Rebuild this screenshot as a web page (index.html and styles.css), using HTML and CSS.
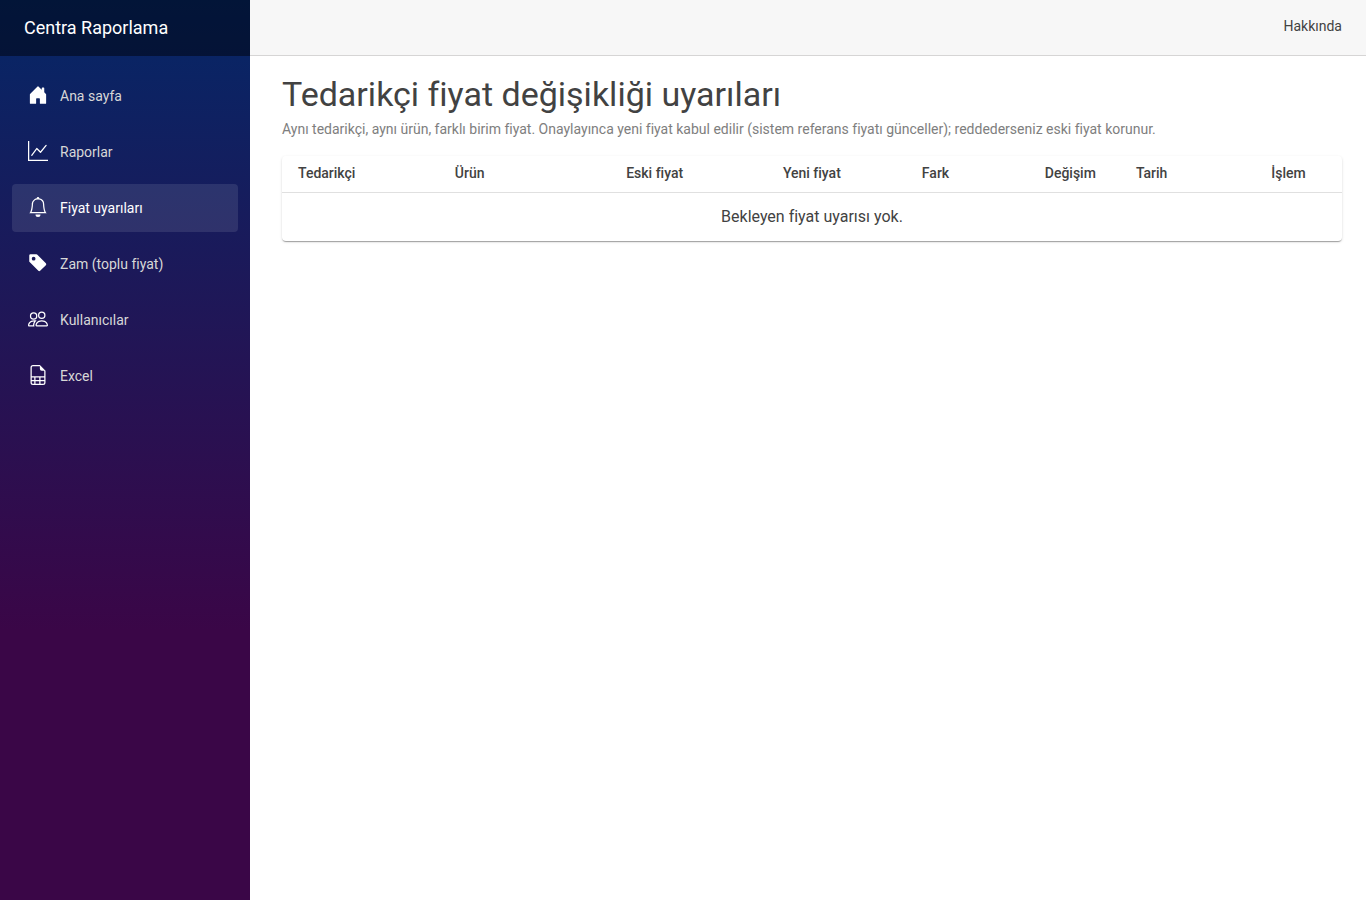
FILE: index.html
```html
<!DOCTYPE html>
<html lang="tr">
<head>
  <meta charset="UTF-8">
  <meta name="viewport" content="width=device-width, initial-scale=1.0">
  <title>Fiyat uyarıları</title>
  <link rel="stylesheet" href="styles.css">
</head>
<body>
  <div class="page">
    <div class="sidebar">
      <div class="brand-row">
        <a class="brand" href="#">Centra Raporlama</a>
      </div>
      <nav class="nav">
        <a class="nav-link" href="#">
          <svg class="icon" viewBox="0 0 16 16"><path d="M6.5 14.5v-3.505c0-.245.25-.495.5-.495h2c.25 0 .5.25.5.5v3.5a.5.5 0 0 0 .5.5h4a.5.5 0 0 0 .5-.5v-7a.5.5 0 0 0-.146-.354L13 5.793V2.5a.5.5 0 0 0-.5-.5h-1a.5.5 0 0 0-.5.5v1.293L8.354 1.146a.5.5 0 0 0-.708 0l-6 6A.5.5 0 0 0 1.5 7.5v7a.5.5 0 0 0 .5.5h4a.5.5 0 0 0 .5-.5Z"/></svg>
          Ana sayfa
        </a>
        <a class="nav-link" href="#">
          <svg class="icon" viewBox="0 0 16 16"><path fill-rule="evenodd" d="M0 0h1v15h15v1H0V0Zm14.817 3.113a.5.5 0 0 1 .07.704l-4.5 5.5a.5.5 0 0 1-.74.037L7.06 6.767l-3.656 5.027a.5.5 0 0 1-.808-.588l4-5.5a.5.5 0 0 1 .758-.06l2.609 2.61 4.15-5.073a.5.5 0 0 1 .704-.07Z"/></svg>
          Raporlar
        </a>
        <a class="nav-link active" href="#">
          <svg class="icon" viewBox="0 0 16 16"><path d="M8 16a2 2 0 0 0 2-2H6a2 2 0 0 0 2 2zM8 1.918l-.797.161A4.002 4.002 0 0 0 4 6c0 .628-.134 2.197-.459 3.742-.16.767-.376 1.566-.663 2.258h10.244c-.287-.692-.502-1.49-.663-2.258C12.134 8.197 12 6.628 12 6a4.002 4.002 0 0 0-3.203-3.92L8 1.917zM14.22 12c.223.447.481.801.78 1H1c.299-.199.557-.553.78-1C2.68 10.2 3 6.88 3 6c0-2.42 1.72-4.44 4.005-4.901a1 1 0 1 1 1.99 0A5.002 5.002 0 0 1 13 6c0 .88.32 4.2 1.22 6z"/></svg>
          Fiyat uyarıları
        </a>
        <a class="nav-link" href="#">
          <svg class="icon" viewBox="0 0 16 16"><path d="M2 1a1 1 0 0 0-1 1v4.586a1 1 0 0 0 .293.707l7 7a1 1 0 0 0 1.414 0l4.586-4.586a1 1 0 0 0 0-1.414l-7-7A1 1 0 0 0 6.586 1H2zm4 3.5a1.5 1.5 0 1 1-3 0 1.5 1.5 0 0 1 3 0z"/></svg>
          Zam (toplu fiyat)
        </a>
        <a class="nav-link" href="#">
          <svg class="icon" viewBox="0 0 16 16"><path d="M15 14s1 0 1-1-1-4-5-4-5 3-5 4 1 1 1 1h8Zm-7.978-1A.261.261 0 0 1 7 12.996c.001-.264.167-1.03.76-1.72C8.312 10.629 9.282 10 11 10c1.717 0 2.687.63 3.24 1.276.593.69.758 1.457.76 1.72l-.008.002a.274.274 0 0 1-.014.002H7.022ZM11 7a2 2 0 1 0 0-4 2 2 0 0 0 0 4Zm3-2a3 3 0 1 1-6 0 3 3 0 0 1 6 0ZM6.936 9.28a5.88 5.88 0 0 0-1.23-.247A7.35 7.35 0 0 0 5 9c-4 0-5 3-5 4 0 .667.333 1 1 1h4.216A2.238 2.238 0 0 1 5 13c0-1.01.377-2.042 1.09-2.904.243-.294.526-.569.846-.816ZM4.92 10A5.493 5.493 0 0 0 4 13H1c0-.26.164-1.03.76-1.724.545-.636 1.492-1.256 3.16-1.275ZM1.5 5.5a3 3 0 1 1 6 0 3 3 0 0 1-6 0Zm3-2a2 2 0 1 0 0 4 2 2 0 0 0 0-4Z"/></svg>
          Kullanıcılar
        </a>
        <a class="nav-link" href="#">
          <svg class="icon" viewBox="0 0 16 16"><path d="M14 14V4.500L9.500 0H4a2 2 0 0 0-2 2v12a2 2 0 0 0 2 2h8a2 2 0 0 0 2-2zM9.500 3A1.500 1.500 0 0 0 11 4.500h2V9H3V2a1 1 0 0 1 1-1h5.500v2zM3 12v-2h2v2H3zm0 1h2v2H4a1 1 0 0 1-1-1v-1zm3 2v-2h3v2H6zm4 0v-2h3v1a1 1 0 0 1-1 1h-2zm3-3h-3v-2h3v2zm-7 0v-2h3v2H6z"/></svg>
          Excel
        </a>
      </nav>
    </div>

    <main class="main">
      <div class="top-row">
        <a class="about" href="#">Hakkında</a>
      </div>
      <article class="content">
        <h1 class="title">Tedarikçi fiyat değişikliği uyarıları</h1>
        <p class="subtitle">Aynı tedarikçi, aynı ürün, farklı birim fiyat. Onaylayınca yeni fiyat kabul edilir (sistem referans fiyatı günceller); reddederseniz eski fiyat korunur.</p>
        <div class="paper">
          <table class="table">
            <thead>
              <tr>
                <th>Tedarikçi</th>
                <th>Ürün</th>
                <th class="right">Eski fiyat</th>
                <th class="right">Yeni fiyat</th>
                <th class="right">Fark</th>
                <th class="right">Değişim</th>
                <th>Tarih</th>
                <th class="center">İşlem</th>
              </tr>
            </thead>
            <tbody>
              <tr>
                <td class="empty" colspan="8">Bekleyen fiyat uyarısı yok.</td>
              </tr>
            </tbody>
          </table>
        </div>
      </article>
    </main>
  </div>
</body>
</html>
```
FILE: styles.css
```css
body {
  margin: 0;
  background: #fff;
  color: #424242;
  font-family: Roboto, "Liberation Sans", sans-serif;
  font-size: 14px;
  line-height: 20px;
}
a {
  color: inherit;
  text-decoration: none;
}
.page {
  display: flex;
  min-height: 100vh;
}

/* sidebar */
.sidebar {
  flex: 0 0 250px;
  background: linear-gradient(180deg, rgb(5, 39, 103) 0%, #3a0647 70%);
}
.brand-row {
  display: flex;
  align-items: center;
  height: 56px;
  padding: 0 24px;
  background: rgba(0, 0, 0, 0.45);
}
.brand {
  color: #fff;
  font-size: 18px;
}
.nav {
  display: flex;
  flex-direction: column;
  gap: 8px;
  padding: 16px 12px;
}
.nav-link {
  display: flex;
  align-items: center;
  gap: 12px;
  height: 48px;
  padding: 0 16px;
  border-radius: 4px;
  color: #d7d7d7;
}
.nav-link:hover,
.nav-link.active {
  background: rgba(255, 255, 255, 0.1);
  color: #fff;
}
.icon {
  width: 20px;
  height: 20px;
  margin-bottom: 2px;
  fill: #fff;
}

/* main area */
.main {
  flex: 1;
  min-width: 0;
}
.top-row {
  display: flex;
  align-items: center;
  justify-content: flex-end;
  box-sizing: border-box;
  height: 56px;
  padding: 0 24px 4px;
  background: #f7f7f7;
  border-bottom: 1px solid #d6d5d5;
}
.content {
  padding: 17px 24px 16px 32px;
}
.title {
  margin: 0 0 4px;
  font-size: 34px;
  font-weight: 400;
  line-height: 42px;
}
.subtitle {
  margin: 0 0 17px;
  color: #7e7e7e;
}
.paper {
  border-radius: 4px;
  box-shadow: 0 2px 1px -1px rgba(0, 0, 0, 0.2), 0 1px 1px 0 rgba(0, 0, 0, 0.14), 0 1px 3px 0 rgba(0, 0, 0, 0.12);
}
.table {
  width: 100%;
  border-collapse: separate;
  border-spacing: 0;
}
.table th {
  padding: 5px 24px 7px 16px;
  border-bottom: 1px solid #e0e0e0;
  font-weight: 500;
  line-height: 24px;
  text-align: left;
  white-space: nowrap;
}
.table th:last-child {
  padding-right: 16px;
}
.table .right {
  text-align: right;
}
.table .center {
  text-align: center;
}
.table .empty {
  padding: 12px 16px;
  font-size: 16px;
  line-height: 24px;
  text-align: center;
}
```
